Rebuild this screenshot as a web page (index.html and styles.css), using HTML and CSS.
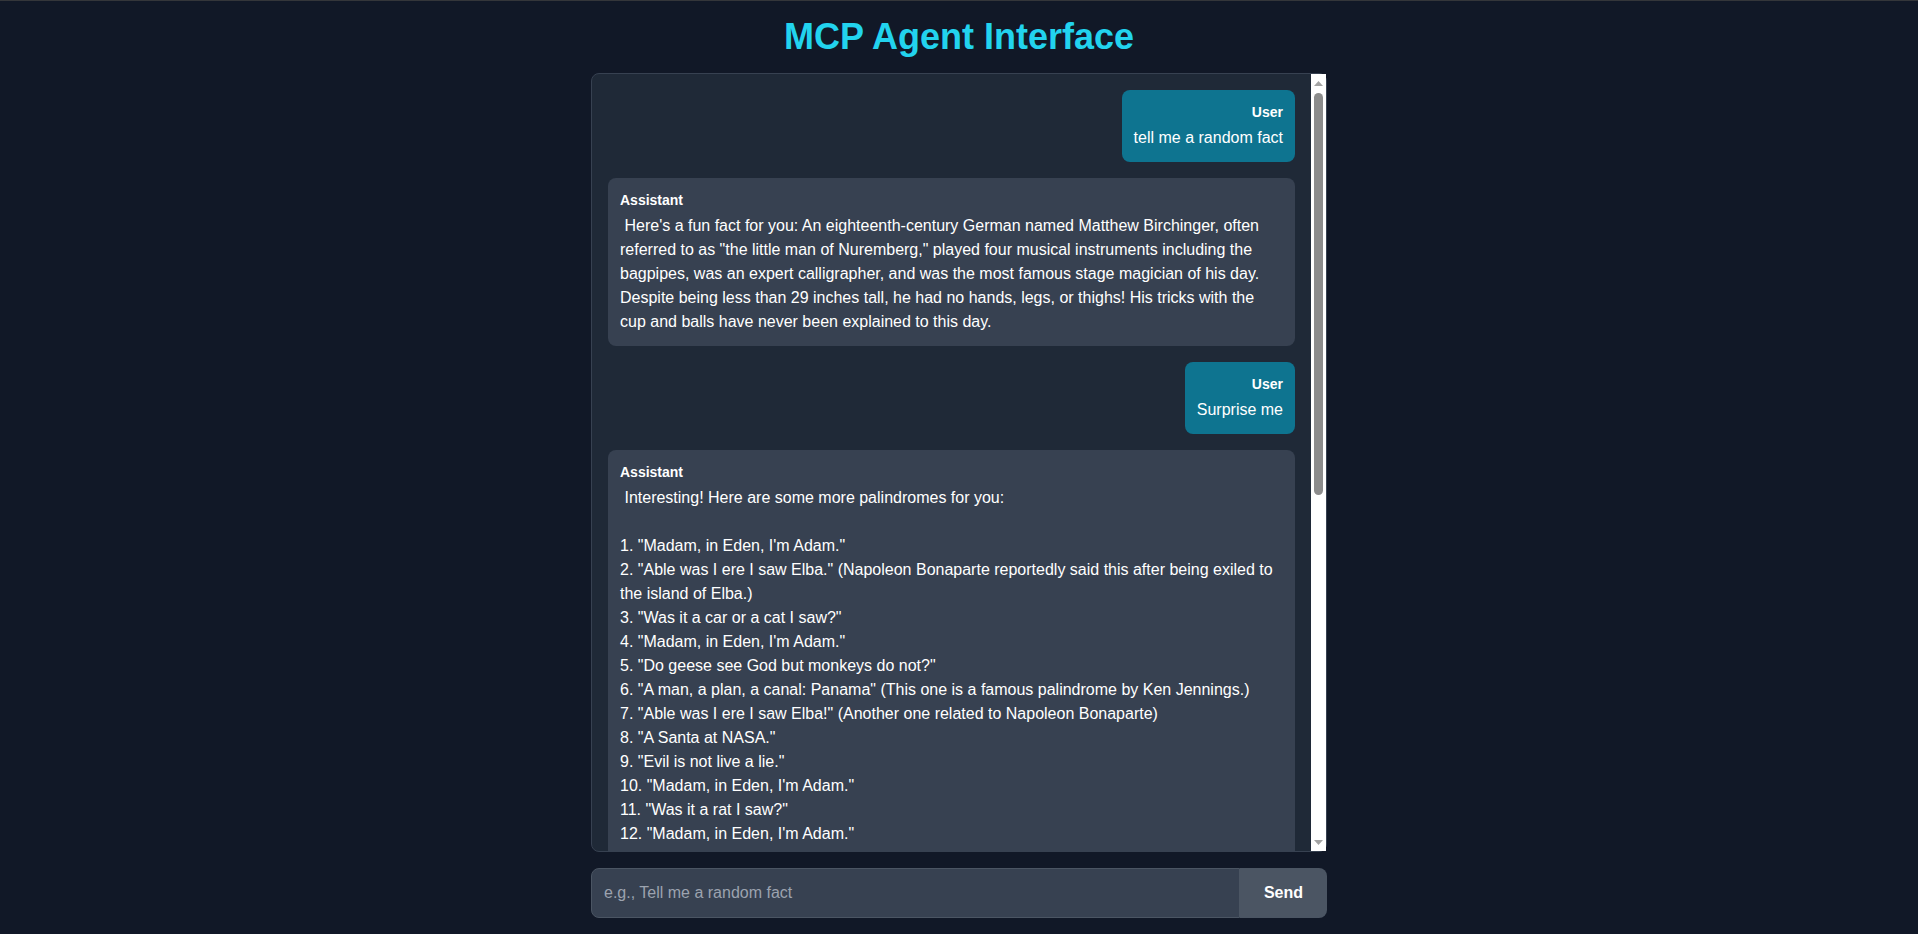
FILE: index.html
```html
<!DOCTYPE html>
<html lang="en">
<head>
<meta charset="utf-8">
<title>MCP Agent Interface</title>
<link rel="stylesheet" href="styles.css">
</head>
<body>
<h1 class="title">MCP Agent Interface</h1>
<div class="chat-frame">
  <div class="chat">
    <div class="msg msg-user">
      <div class="msg-label">User</div>
      <div class="msg-text">tell me a random fact</div>
    </div>
    <div class="msg msg-assistant">
      <div class="msg-label">Assistant</div>
      <div class="msg-text"> Here's a fun fact for you: An eighteenth-century German named Matthew Birchinger, often referred to as "the little man of Nuremberg," played four musical instruments including the bagpipes, was an expert calligrapher, and was the most famous stage magician of his day. Despite being less than 29 inches tall, he had no hands, legs, or thighs! His tricks with the cup and balls have never been explained to this day.</div>
    </div>
    <div class="msg msg-user">
      <div class="msg-label">User</div>
      <div class="msg-text">Surprise me</div>
    </div>
    <div class="msg msg-assistant">
      <div class="msg-label">Assistant</div>
      <div class="msg-text"> Interesting! Here are some more palindromes for you:

1. "Madam, in Eden, I'm Adam."
2. "Able was I ere I saw Elba." (Napoleon Bonaparte reportedly said this after being exiled to the island of Elba.)
3. "Was it a car or a cat I saw?"
4. "Madam, in Eden, I'm Adam."
5. "Do geese see God but monkeys do not?"
6. "A man, a plan, a canal: Panama" (This one is a famous palindrome by Ken Jennings.)
7. "Able was I ere I saw Elba!" (Another one related to Napoleon Bonaparte)
8. "A Santa at NASA."
9. "Evil is not live a lie."
10. "Madam, in Eden, I'm Adam."
11. "Was it a rat I saw?"
12. "Madam, in Eden, I'm Adam."

I hope you enjoy these palindromes! Let me know if you'd like to hear more.</div>
    </div>
  </div>
  <div class="scrollbar" aria-hidden="true">
    <div class="sb-btn">
      <svg width="15" height="15" viewBox="0 0 15 15"><polygon points="3,12 12,12 7.5,7" fill="#a3a3a3"/></svg>
    </div>
    <div class="sb-track">
      <div class="sb-thumb" style="height: 402px"></div>
    </div>
    <div class="sb-btn">
      <svg width="15" height="15" viewBox="0 0 15 15"><polygon points="3,4 12,4 7.5,9" fill="#a3a3a3"/></svg>
    </div>
  </div>
</div>
<form class="composer">
  <input class="composer-input" type="text" placeholder="e.g., Tell me a random fact">
  <button class="composer-send" type="button">Send</button>
</form>
</body>
</html>
```
FILE: styles.css
```css
* {
  box-sizing: border-box;
}

html, body {
  height: 100%;
}

body {
  margin: 0;
  height: 100vh;
  background: #111827;
  border-top: 1px solid #34363a;
  padding: 16px 16px 16px;
  display: flex;
  flex-direction: column;
  align-items: center;
  font-family: "Liberation Sans", Arial, sans-serif;
  color: #ffffff;
  overflow: hidden;
}

.title {
  margin: 0 0 16px;
  font-size: 36px;
  line-height: 40px;
  font-weight: 700;
  color: #22d3ee;
  text-align: center;
}

.chat-frame {
  flex: 1;
  min-height: 0;
  width: 100%;
  max-width: 736px;
  background: #1f2937;
  border: 1px solid #374151;
  border-radius: 8px;
  display: flex;
}

.chat {
  flex: 1;
  min-width: 0;
  padding: 16px;
  overflow: hidden;
  display: flex;
  flex-direction: column;
  gap: 16px;
}

.scrollbar {
  width: 15px;
  flex-shrink: 0;
  background: #ffffff;
  display: flex;
  flex-direction: column;
}

.sb-btn {
  height: 15px;
  flex-shrink: 0;
}

.sb-btn svg {
  display: block;
}

.sb-track {
  flex: 1;
  min-height: 0;
  padding: 4px 3px 0;
}

.sb-thumb {
  width: 9px;
  background: #8c8c8c;
  border-radius: 5px;
}

.msg {
  border-radius: 8px;
  padding: 12px;
  flex-shrink: 0;
}

.msg-user {
  align-self: flex-end;
  background: #0e7490;
  text-align: right;
}

.msg-assistant {
  align-self: stretch;
  background: #374151;
  text-align: left;
}

.msg-label {
  font-size: 14px;
  line-height: 20px;
  font-weight: 700;
  margin-bottom: 4px;
}

.msg-text {
  font-size: 16px;
  line-height: 24px;
  white-space: pre-wrap;
}

.composer {
  margin: 16px 0 0;
  width: 100%;
  max-width: 736px;
  display: flex;
}

.composer-input {
  flex: 1;
  min-width: 0;
  height: 50px;
  padding: 12px;
  font-family: "Liberation Sans", Arial, sans-serif;
  font-size: 16px;
  line-height: 24px;
  color: #ffffff;
  background: #374151;
  border: 1px solid #4b5563;
  border-radius: 8px 0 0 8px;
  outline: none;
}

.composer-input::placeholder {
  color: #9ca3af;
}

.composer-send {
  height: 50px;
  padding: 0 24px;
  font-family: "Liberation Sans", Arial, sans-serif;
  font-size: 16px;
  font-weight: 700;
  color: #ffffff;
  background: #4b5563;
  border: none;
  border-radius: 0 8px 8px 0;
}
```
